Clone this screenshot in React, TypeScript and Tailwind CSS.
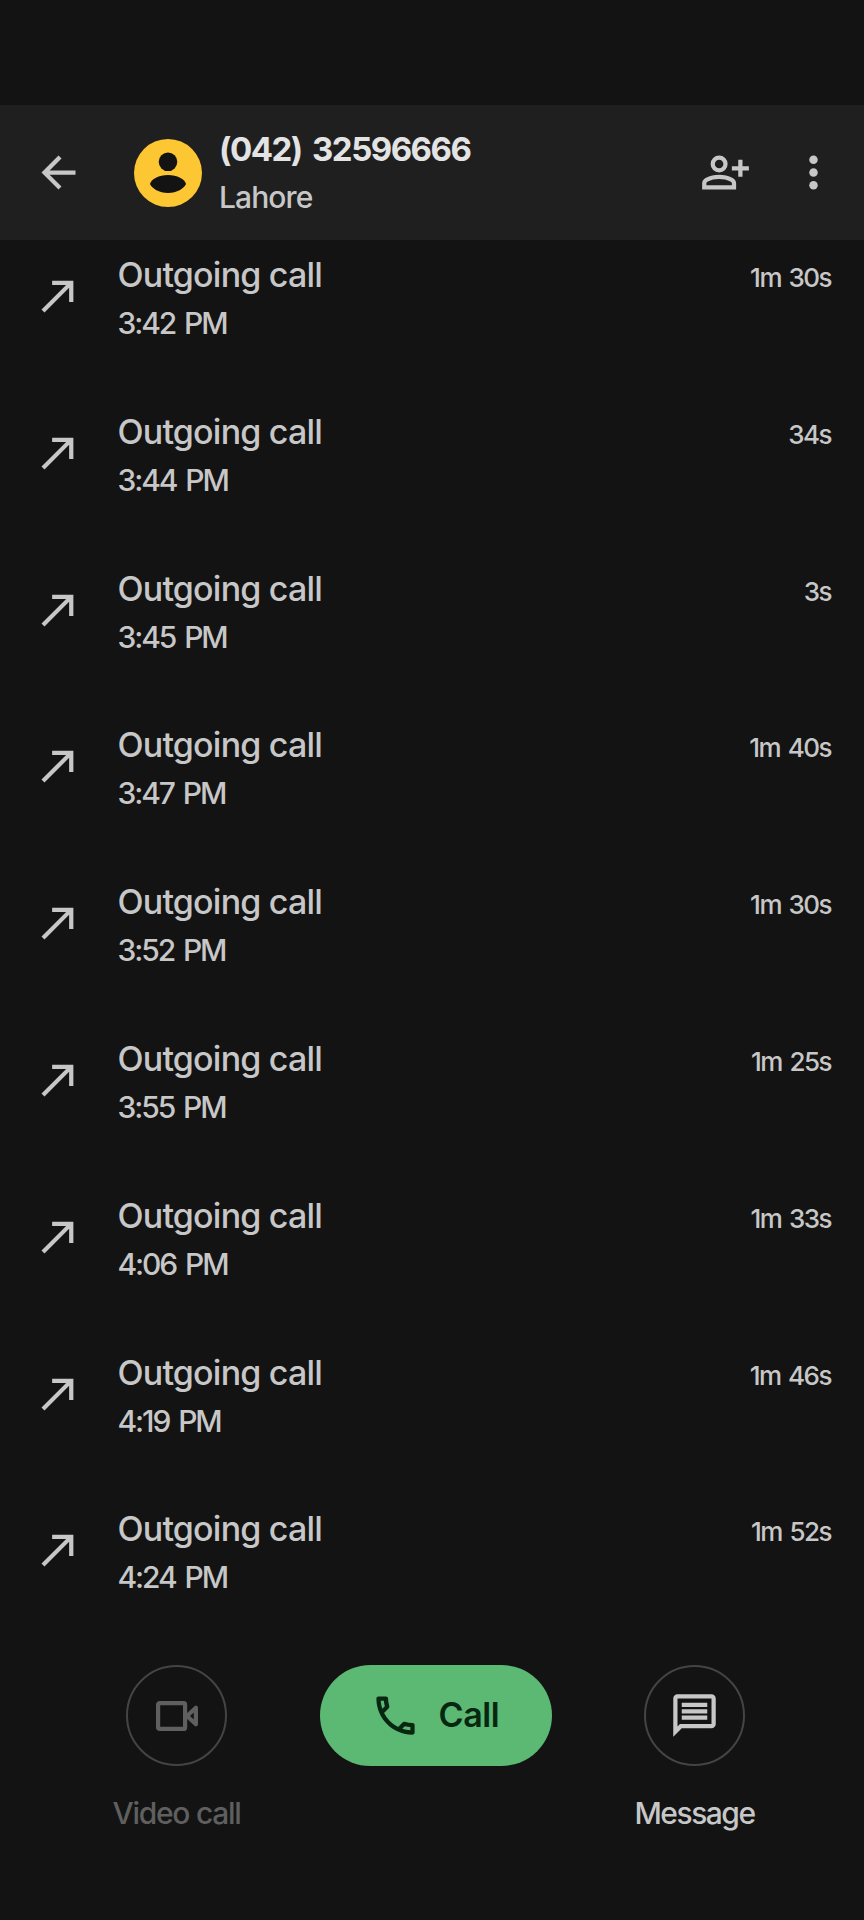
import React from 'react';

interface CallEntry {
  time: string;
  duration: string;
}

const calls: CallEntry[] = [
  { time: '3:42 PM', duration: '1m 30s' },
  { time: '3:44 PM', duration: '34s' },
  { time: '3:45 PM', duration: '3s' },
  { time: '3:47 PM', duration: '1m 40s' },
  { time: '3:52 PM', duration: '1m 30s' },
  { time: '3:55 PM', duration: '1m 25s' },
  { time: '4:06 PM', duration: '1m 33s' },
  { time: '4:19 PM', duration: '1m 46s' },
  { time: '4:24 PM', duration: '1m 52s' },
];

interface IconProps {
  className?: string;
  children: React.ReactNode;
}

const Icon: React.FC<IconProps> = ({ className = '', children }) => (
  <svg viewBox="0 0 24 24" fill="currentColor" className={`w-[51px] h-[51px] shrink-0 ${className}`}>
    {children}
  </svg>
);

const Header: React.FC = () => (
  <header className="h-[135px] bg-[#1f1f1f] flex items-center pl-[33px] pr-[25px]">
    <button aria-label="Back" className="text-[#c7c7c7]">
      <Icon>
        <path d="M20 11H7.83l5.59-5.59L12 4l-8 8 8 8 1.41-1.41L7.83 13H20v-2z" />
      </Icon>
    </button>
    <svg viewBox="0 0 68 68" className="w-[68px] h-[68px] ml-[50px] shrink-0">
      <circle cx="34" cy="34" r="34" fill="#fdc733" />
      <circle cx="34" cy="22.8" r="9.3" fill="#131313" />
      <path d="M16 45C17 40 25 36 34 36S51 40 52 45C50 49.5 43 54 34 54S18 49.5 16 45Z" fill="#131313" />
    </svg>
    <div className="ml-[17px] pt-px flex-1 whitespace-nowrap">
      <h1 className="text-[33px] leading-[47px] font-bold text-[#e3e3e3] tracking-[-1.5px] [word-spacing:4px]">(042) 32596666</h1>
      <p className="text-[30px] leading-[48px] font-medium text-[#c7c7c7] tracking-[-0.9px]">Lahore</p>
    </div>
    <button aria-label="Add contact" className="text-[#c7c7c7] mr-[37px] mb-px">
      <Icon>
        <path
          fillRule="evenodd"
          d="M9 12a4 4 0 1 1 0-8 4 4 0 0 1 0 8zm0-2a2 2 0 1 0 0-4 2 2 0 0 0 0 4zM1 20v-2.8q0-.85.44-1.56T2.6 14.55q1.55-.775 3.15-1.1625T9 13t3.25.3875T15.4 14.55q.725.375 1.1625 1.0875T17 17.2V20zm2-2h12v-.8q0-.275-.1375-.5T14.5 16.35q-1.35-.675-2.725-1.0125T9 15t-2.775.3375T3.5 16.35q-.225.125-.3625.35T3 17.2zM18 14v-3h-3V9h3V6h2v3h3v2h-3v3z"
        />
      </Icon>
    </button>
    <button aria-label="More options" className="text-[#c7c7c7]">
      <Icon>
        <circle cx="12" cy="6" r="2" />
        <circle cx="12" cy="12" r="2" />
        <circle cx="12" cy="18" r="2" />
      </Icon>
    </button>
  </header>
);

const CallRow: React.FC<CallEntry> = ({ time, duration }) => (
  <li className="h-[156.8px] flex items-start pl-[33px] pr-[33px] pt-[11px] font-medium text-[#c7c7c7] whitespace-nowrap">
    <Icon className="mt-[19px]">
      <path d="M9 5v2h6.59L4 18.59 5.41 20 17 8.41V15h2V5z" />
    </Icon>
    <div className="ml-[33.5px] flex-1">
      <p className="text-[34px] leading-[48px] tracking-[-0.8px]">Outgoing call</p>
      <p className="text-[30px] leading-[48px] tracking-[-2.1px] [word-spacing:3px]">{time}</p>
    </div>
    <span className="text-[26px] leading-[54px] tracking-[-1.5px] [word-spacing:2px]">{duration}</span>
  </li>
);

const ActionBar: React.FC = () => (
  <footer className="flex items-start pl-[76.5px] whitespace-nowrap">
    <div className="w-[200px] flex flex-col items-center text-[#5f5f5f]">
      <button aria-label="Video call" className="size-[101px] rounded-full border-2 border-[#444444] flex items-center justify-center">
        <svg viewBox="0 0 42 30" className="w-[42px] h-[30px]" fill="none" stroke="currentColor" strokeWidth="4.2">
          <rect x="2.1" y="2.1" width="27" height="25.8" rx="1.5" />
          <path d="M31 15l8.9-8.3v16.6z" strokeLinejoin="round" />
        </svg>
      </button>
      <span className="mt-[23px] text-[30px] leading-[48px] font-medium tracking-[-1.3px]">Video call</span>
    </div>
    <button className="ml-[43px] w-[232px] h-[101px] rounded-full bg-[#5bb974] text-[#072711] flex items-center pl-[50px]">
      <Icon>
        <path d="M6.54 5c.06.89.21 1.76.45 2.59l-1.2 1.2c-.41-1.2-.67-2.47-.76-3.79h1.51m9.86 12.02c.85.24 1.72.39 2.6.45v1.49c-1.32-.09-2.59-.35-3.8-.75l1.2-1.19M7.5 3H4c-.55 0-1 .45-1 1 0 9.39 7.61 17 17 17 .55 0 1-.45 1-1v-3.49c0-.55-.45-1-1-1-1.24 0-2.45-.2-3.57-.57a.84.84 0 0 0-.31-.05c-.26 0-.51.1-.71.29l-2.2 2.2a15.149 15.149 0 0 1-6.59-6.59l2.2-2.2c.28-.28.36-.67.25-1.02A11.36 11.36 0 0 1 8.5 4c0-.55-.45-1-1-1z" />
      </Icon>
      <span className="ml-[18px] mb-[2px] text-[34px] leading-[48px] font-semibold tracking-[-0.4px]">Call</span>
    </button>
    <div className="ml-[43px] w-[200px] flex flex-col items-center text-[#c7c7c7]">
      <button aria-label="Message" className="size-[101px] rounded-full border-2 border-[#444444] flex items-center justify-center">
        <Icon>
          <path d="M4 4h16v12H5.17L4 17.17V4m0-2c-1.1 0-1.99.9-1.99 2L2 22l4-4h14c1.1 0 2-.9 2-2V4c0-1.1-.9-2-2-2H4zm2 10h12v2H6v-2zm0-3h12v2H6V9zm0-3h12v2H6V6z" />
        </Icon>
      </button>
      <span className="mt-[23px] text-[30px] leading-[48px] font-medium tracking-[-1.5px]">Message</span>
    </div>
  </footer>
);

export default function App() {
  return (
    <div className="w-[864px] h-[1920px] bg-[#131313] pt-[105px] overflow-hidden font-['Inter',sans-serif]">
      <Header />
      <ul className="h-[1425px] overflow-hidden">
        {calls.map((call) => (
          <CallRow key={call.time} {...call} />
        ))}
      </ul>
      <ActionBar />
    </div>
  );
}
